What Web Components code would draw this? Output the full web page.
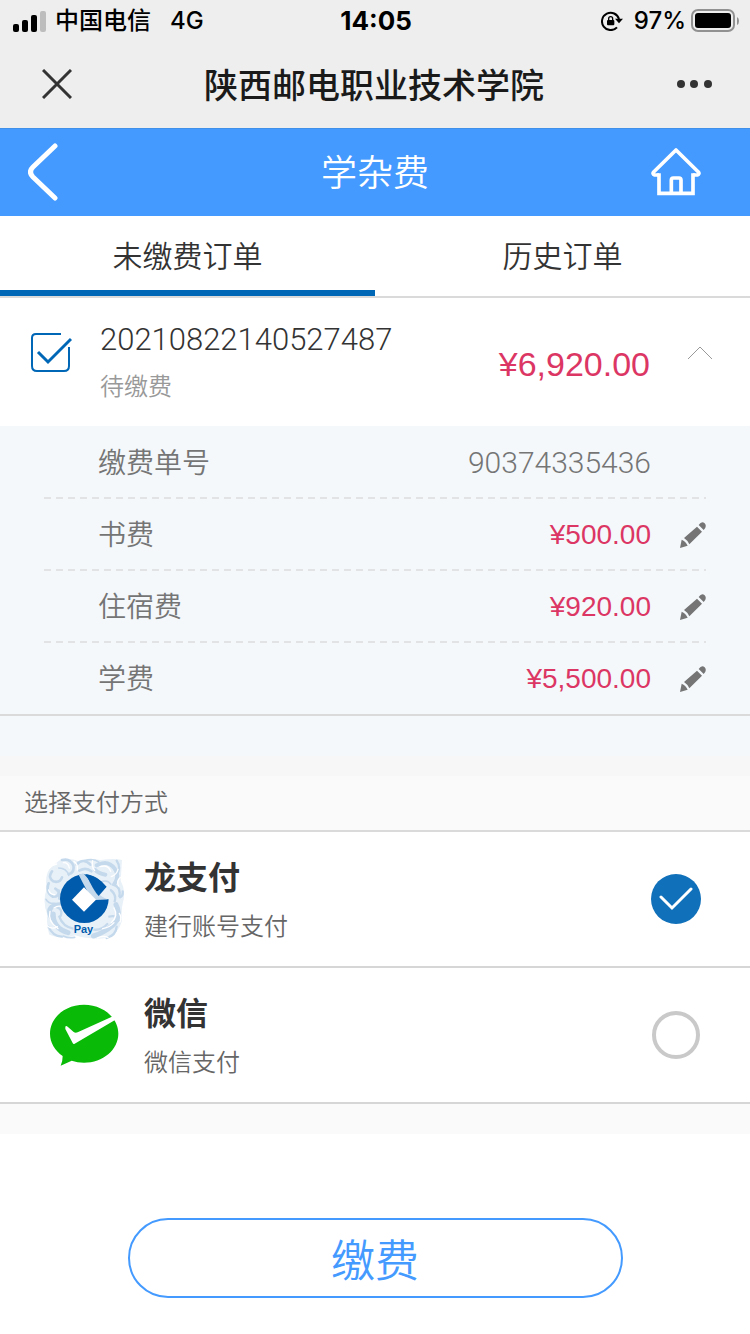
<!DOCTYPE html>
<html lang="zh-CN">
<head>
<meta charset="utf-8">
<meta name="viewport" content="width=device-width, initial-scale=1">
<title>学杂费</title>
<style>
  body {
    margin: 0;
    background: #fff;
    color: #333;
    font-family: "Noto Sans CJK SC", sans-serif;
    font-weight: 350;
    --blue: #449aff;
    --deep-blue: #0066b6;
    --price: #dc3664;
    --line: #dadada;
    --soft: #f4f8fb;
    --latin: Roboto, "Noto Sans CJK SC", sans-serif;
    --money: "Liberation Sans", "Noto Sans CJK SC", sans-serif;
  }
</style>
</head>
<body>
<status-bar carrier="中国电信" network="4G" time="14:05" battery="97%"></status-bar>
<chat-title>陕西邮电职业技术学院</chat-title>
<page-header>学杂费</page-header>
<order-tabs></order-tabs>
<order-card number="20210822140527487" state="待缴费" total="¥6,920.00">
  <fee-row label="缴费单号" plain>90374335436</fee-row>
  <fee-row label="书费">¥500.00</fee-row>
  <fee-row label="住宿费">¥920.00</fee-row>
  <fee-row label="学费">¥5,500.00</fee-row>
</order-card>
<pay-methods>选择支付方式</pay-methods>
<pay-button>缴费</pay-button>

<script>
class StatusBar extends HTMLElement {
  connectedCallback() {
    this.attachShadow({ mode: "open" });
    this.shadowRoot.innerHTML = /* HTML */ ` <style>
        :host {
          display: grid;
          grid-template-columns: 1fr auto 1fr;
          align-items: center;
          height: 40px;
          padding: 0 11px 0 13px;
          background: #eee;
          color: #000;
          font-family: Inter, "Noto Sans CJK SC", sans-serif;
          font-size: 24px;
          font-weight: 500;
          line-height: 42px;
        }
        div {
          display: flex;
          align-items: center;
        }
        .left { gap: 9px; }
        .net { margin-left: 10px; }
        .right { justify-content: flex-end; gap: 5px; }
        .lock { margin-right: 6px; }
        .time {
          font-size: 26px;
          font-weight: 700;
        }
      </style>
      <div class="left">
        <svg width="33" height="21" viewBox="0 0 33 21">
          <rect x="0" y="13" width="6" height="8" rx="2" />
          <rect x="9" y="9" width="6" height="12" rx="2" />
          <rect x="18" y="4" width="6" height="17" rx="2" />
          <rect x="27" y="0" width="6" height="21" rx="2" fill="#bdbdbd" />
        </svg>
        <span>${this.getAttribute("carrier")}</span>
        <span class="net">${this.getAttribute("network")}</span>
      </div>
      <span class="time">${this.getAttribute("time")}</span>
      <div class="right">
        <svg class="lock" width="22" height="20" viewBox="0 0 66 60">
          <path d="M48 49A26 26 0 1 1 54 24" fill="none" stroke="#000" stroke-width="6" />
          <path d="M42 23h24L54 37z" />
          <rect x="18" y="27" width="22" height="16" rx="3" />
          <path d="M23 28v-5a6 6 0 0 1 12 0v5" fill="none" stroke="#000" stroke-width="4" />
        </svg>
        <span>${this.getAttribute("battery")}</span>
        <svg width="48" height="24" viewBox="0 0 48 24">
          <rect x="1" y="1" width="42" height="21" rx="6" fill="none" stroke="#919191" stroke-width="2" />
          <rect x="4" y="4" width="36" height="15" rx="3" />
          <path d="M46 8q2 1 2 4t-2 4z" fill="#919191" />
        </svg>
      </div>`;
  }
}
customElements.define("status-bar", StatusBar);

class ChatTitle extends HTMLElement {
  connectedCallback() {
    this.attachShadow({ mode: "open" });
    this.shadowRoot.innerHTML = /* HTML */ ` <style>
        :host {
          display: grid;
          grid-template-columns: 1fr auto 1fr;
          align-items: center;
          height: 88px;
          padding: 0 38px 0 36px;
          background: #eee;
        }
        h1 {
          margin: 0;
          color: #1a1a1a;
          font-size: 34px;
          font-weight: 500;
          line-height: 84px;
        }
        button {
          display: grid;
          padding: 0 6px;
          border: 0;
          background: none;
        }
        .more {
          justify-self: end;
          padding: 0;
        }
      </style>
      <button aria-label="关闭">
        <svg width="30" height="30" viewBox="0 0 30 30">
          <path d="M1 1l28 28M29 1L1 29" stroke="#333" stroke-width="3" />
        </svg>
      </button>
      <h1><slot></slot></h1>
      <button class="more" aria-label="更多">
        <svg width="35" height="8" viewBox="0 0 35 8" fill="#333">
          <circle cx="4" cy="4" r="4" />
          <circle cx="17" cy="4" r="4" />
          <circle cx="31" cy="4" r="4" />
        </svg>
      </button>`;
  }
}
customElements.define("chat-title", ChatTitle);

class PageHeader extends HTMLElement {
  connectedCallback() {
    this.attachShadow({ mode: "open" });
    this.shadowRoot.innerHTML = /* HTML */ ` <style>
        :host {
          display: grid;
          grid-template-columns: 1fr auto 1fr;
          align-items: center;
          height: 88px;
          box-sizing: border-box;
          padding: 0 28px 2px;
          border-top: 1px solid #408fe8;
          background: var(--blue);
          color: #fff;
        }
        h2 {
          margin: 0;
          padding-bottom: 4px;
          font-size: 36px;
          font-weight: inherit;
          line-height: 80px;
        }
        button {
          display: grid;
          padding: 0;
          border: 0;
          background: none;
        }
        a {
          display: grid;
          justify-self: end;
          padding-right: 21px;
        }
        svg {
          fill: none;
          stroke: #fff;
        }
      </style>
      <button aria-label="返回">
        <svg width="30" height="58" viewBox="0 0 30 58">
          <path d="M27 3L5 24q-5 5 0 10l22 21" stroke-width="5" stroke-linecap="round" />
        </svg>
      </button>
      <h2><slot></slot></h2>
      <a href="#home" aria-label="首页">
        <svg width="50" height="48" viewBox="0 0 150 144">
          <path d="M24 81H11q-8-3-3-9L75 6l67 66q5 6-3 9h-13" stroke-width="11" stroke-linejoin="round" />
          <path d="M24 76v60h102V76M61 136V96q0-6 6-6h17q6 0 6 6v40" stroke-width="11" />
        </svg>
      </a>`;
  }
}
customElements.define("page-header", PageHeader);

class OrderTabs extends HTMLElement {
  connectedCallback() {
    this.attachShadow({ mode: "open" });
    this.shadowRoot.innerHTML = /* HTML */ ` <style>
        :host {
          display: grid;
          grid-template-columns: 1fr 1fr;
          border-bottom: 2px solid var(--line);
        }
        button {
          height: 80px;
          padding: 2px 0 0;
          border: 0;
          border-bottom: 6px solid transparent;
          background: #fff;
          color: #333;
          font: inherit;
          font-size: 30px;
          line-height: 72px;
        }
        [aria-selected="true"] { border-bottom-color: var(--deep-blue); }
      </style>
      <button role="tab" aria-selected="true">未缴费订单</button>
      <button role="tab" aria-selected="false">历史订单</button>`;

    this.$tabs = this.shadowRoot.querySelectorAll("button");
    this.$tabs.forEach((tab) => {
      tab.addEventListener("click", () => this.select(tab));
    });
  }

  select(tab) {
    this.$tabs.forEach((t) => t.setAttribute("aria-selected", t === tab));
  }
}
customElements.define("order-tabs", OrderTabs);

class OrderCard extends HTMLElement {
  connectedCallback() {
    this.attachShadow({ mode: "open" });
    this.shadowRoot.innerHTML = /* HTML */ ` <style>
        :host { display: block; }
        header {
          display: grid;
          grid-template-columns: 100px 1fr auto 100px;
          padding: 18px 0;
        }
        .check {
          display: grid;
          margin: 16px 0 0 30px;
          width: 42px;
          height: 42px;
        }
        .check > * { grid-area: 1 / 1; }
        input {
          appearance: none;
          width: 42px;
          height: 42px;
          margin: 0;
        }
        .check svg {
          fill: none;
          stroke: var(--deep-blue);
          stroke-width: 2;
          pointer-events: none;
        }
        input:not(:checked) + svg .tick { display: none; }
        label {
          display: block;
          font-family: var(--latin);
          font-size: 31px;
          line-height: 48px;
        }
        p {
          margin: 0;
          color: #999;
          font-size: 24px;
          line-height: 42px;
          padding-bottom: 2px;
        }
        .total {
          align-self: center;
          color: var(--price);
          font-family: var(--money);
          font-size: 34px;
          font-weight: 400;
          line-height: 48px;
          padding-top: 4px;
        }
        button {
          display: grid;
          align-self: start;
          justify-self: center;
          margin-top: 24px;
          padding: 6px 0;
          border: 0;
          background: none;
        }
        section {
          padding-bottom: 40px;
          background: var(--soft);
        }
        .fees {
          padding-top: 1px;
          border-bottom: 2px solid var(--line);
        }
        :host([collapsed]) section { display: none; }
      </style>
      <header>
        <div class="check">
          <input type="checkbox" id="order" checked>
          <svg width="42" height="42" viewBox="0 0 42 42">
            <path d="M31 2H6Q2 2 2 6v28q0 5 5 5h27q5 0 5-5V15" />
            <path class="tick" d="M8 20l10 10L41 7" stroke-width="3" />
          </svg>
        </div>
        <div>
          <label for="order">${this.getAttribute("number")}</label>
          <p>${this.getAttribute("state")}</p>
        </div>
        <span class="total">${this.getAttribute("total")}</span>
        <button aria-label="收起明细">
          <svg width="26" height="14" viewBox="0 0 26 14">
            <path d="M1 13L13 1l12 12" fill="none" stroke="#999" />
          </svg>
        </button>
      </header>
      <section><div class="fees"><slot></slot></div></section>`;

    this.shadowRoot.querySelector("button").addEventListener("click", () => {
      this.toggleAttribute("collapsed");
    });
  }
}
customElements.define("order-card", OrderCard);

class FeeRow extends HTMLElement {
  connectedCallback() {
    this.attachShadow({ mode: "open" });
    const label = this.getAttribute("label");
    const edit = /* HTML */ ` <button aria-label="修改${label}">
        <svg width="26" height="26" viewBox="0 0 78 78" fill="#757575">
          <path d="M0 78l5-25q12 4 18 18zM12 48l39-34 15 15-38 38q-5-12-16-19zM56 9q9-13 18-5 8 9-3 20z" />
        </svg>
      </button>`;

    this.shadowRoot.innerHTML = /* HTML */ ` <style>
        :host {
          display: grid;
          grid-template-columns: 1fr auto 55px;
          align-items: center;
          height: 72px;
          margin: 0 44px;
          padding-left: 54px;
          color: #757575;
          font-size: 28px;
          line-height: 72px;
          background: repeating-linear-gradient(90deg, #e2e3e4 0 7px, transparent 7px 12px) left bottom / 100% 2px no-repeat;
        }
        :host(:last-of-type) {
          height: 71px;
          background: none;
        }
        .label {
          line-height: 68px;
          padding-bottom: 4px;
        }
        .value {
          color: var(--price);
          font-family: var(--money);
          font-weight: 400;
        }
        :host([plain]) .value {
          color: #757575;
          font-family: var(--latin);
          font-size: 30px;
          font-weight: inherit;
        }
        button {
          display: grid;
          justify-self: end;
          padding: 0;
          border: 0;
          background: none;
        }
      </style>
      <span class="label">${label}</span>
      <span class="value"><slot></slot></span>
      ${this.hasAttribute("plain") ? "" : edit}`;
  }
}
customElements.define("fee-row", FeeRow);

const dragonLogo = /* HTML */ `<svg width="80" height="82" viewBox="0 0 240 246">
  <path d="M52 4q30-6 56 8 30-12 62-6 40-6 64 0-2 34-4 62 16 30 8 60-8 30-4 60-10 40-48 52-50 6-92-8-40 14-78-2-10-30-6-60-16-40-2-76-6-40 8-60 20-20 36-30z" fill="#e9f1f8" />
  <g fill="none" stroke="#c5d9ec" stroke-linecap="round">
    <path d="M22 178q-18-34 24-38M28 168q-2 42 44 56M216 140q18 34-10 62-26 22-58 32" stroke-width="15" />
    <path d="M158 22q34-18 54 10 16 22 0 44M184 50q-22-4-30-14" stroke-width="12" />
    <path d="M54 6q24-6 34 16 4 22-14 26M24 40q-14 18 4 30 20 6 26-12M14 76q-10 26 12 40 20 2 18-18M34 92q14 8 12 30M98 20q18-22 42 0M106 38q20-12 36 2" stroke-width="8" />
    <path d="M218 8q12 18 4 36M206 80q26 6 20 34M236 100q2 14-8 18M200 96q18 14 12 34M14 206q10 28 40 30M46 176q10 30 42 36M34 146q24 6 16 28M218 206q-2 26-30 34M196 176q20-6 28 12M144 214q26 6 46-16" stroke-width="7" />
    <path d="M44 30q24 0 30 22M120 8q30-8 44 4M176 70q16-4 24 8M6 124q8 14 26 12M92 238q-18 4-34-4" stroke-width="5" />
  </g>
  <g fill="none" stroke="#fff" stroke-width="4" stroke-linecap="round">
    <path d="M18 160q-8 30 24 52M30 150q14-10 26-2M168 26q24-8 32 14M210 150q14 24-8 44M58 14q16 0 18 16M202 56q16-6 20-22M14 96q4 14 18 14M176 212q22-4 34-18" />
    <path d="M8 32q14-10 30-14M90 10q12 8 10 26M146 8q-4 18 6 30M230 58q-14 10-6 26M40 206q-14 10-30-2M226 166q8 12 2 26M160 240q16-8 32-2" />
  </g>
  <circle cx="121" cy="122" r="73" fill="#005bac" />
  <path d="M148 124l44-42 14 42z" fill="#e9f1f8" />
  <path d="M118 46q24 26 34 48 12 20 38 30l-36 2q-16-10-26-30-14-26-24-46z" fill="#c5d9ec" />
  <path d="M126 48q38 10 62 38l-24 28q-16-16-38-66z" fill="#005bac" />
  <path d="M120 88l36 37-36 36-36-36z" fill="#fff" />
  <text x="89" y="224" fill="#005bac" stroke="#e9f1f8" stroke-width="6" paint-order="stroke" font-family="Liberation Sans, sans-serif" font-size="33" font-weight="700">Pay</text>
</svg>`;

const wechatLogo = /* HTML */ `<svg width="70" height="62" viewBox="0 0 210 186">
  <path d="M105 2c57 0 103 39 103 87s-46 87-103 87q-20 0-37-6L35 185q6-12 6-29C18 140 3 116 3 89 3 41 48 2 105 2z" fill="#09bb07" />
  <path d="M49 68q2-4 7 0l18 16q5 4 12 1l106-48 10 9L77 119q-4 2-6-2L49 75z" fill="#fff" />
</svg>`;

class PayMethods extends HTMLElement {
  methods = [
    { id: "dragon", name: "龙支付", note: "建行账号支付", logo: dragonLogo },
    { id: "wechat", name: "微信", note: "微信支付", logo: wechatLogo },
  ];

  connectedCallback() {
    this.attachShadow({ mode: "open" });
    this.shadowRoot.innerHTML = /* HTML */ ` <style>
        :host {
          display: block;
          border-top: 20px solid #f7f7f7;
          border-bottom: 30px solid #fafafa;
        }
        h3 {
          margin: 0;
          padding: 0 24px 4px;
          border-bottom: 2px solid var(--line);
          background: #fafafa;
          color: #666;
          font-size: 24px;
          font-weight: inherit;
          line-height: 50px;
        }
        label {
          display: grid;
          grid-template-columns: 80px 1fr 50px;
          column-gap: 20px;
          align-items: center;
          height: 134px;
          padding: 0 49px 0 44px;
          border-bottom: 2px solid #d6d6d6;
        }
        .logo {
          display: grid;
          justify-items: center;
        }
        strong {
          display: block;
          margin-bottom: 4px;
          font-size: 32px;
          font-weight: 700;
          line-height: 48px;
        }
        small {
          display: block;
          color: #666;
          font-size: 24px;
          line-height: 44px;
        }
        .radio {
          display: grid;
          place-items: center;
        }
        .radio > * { grid-area: 1 / 1; }
        input {
          appearance: none;
          box-sizing: border-box;
          width: 48px;
          height: 48px;
          margin: 0;
          border: 4px solid #c9c9c9;
          border-radius: 50%;
        }
        input:checked {
          width: 50px;
          height: 50px;
          border: 0;
          background: #1070b9;
        }
        input:not(:checked) + svg { display: none; }
        .radio svg { pointer-events: none; }
      </style>
      <h3><slot></slot></h3>
      ${this.methods.map((m, i) => this.row(m, i === 0)).join("")}`;
  }

  row({ id, name, note, logo }, checked) {
    return /* HTML */ ` <label for="${id}">
        <span class="logo">${logo}</span>
        <span><strong>${name}</strong><small>${note}</small></span>
        <span class="radio">
          <input type="radio" name="pay" id="${id}" ${checked ? "checked" : ""}>
          <svg width="34" height="24" viewBox="0 0 34 24">
            <path d="M2 10l11 11L32 2" fill="none" stroke="#fff" stroke-width="3" stroke-linecap="round" />
          </svg>
        </span>
      </label>`;
  }
}
customElements.define("pay-methods", PayMethods);

class PayButton extends HTMLElement {
  connectedCallback() {
    this.attachShadow({ mode: "open" });
    this.shadowRoot.innerHTML = /* HTML */ ` <style>
        :host {
          display: grid;
          padding: 84px 17% 36px;
        }
        button {
          height: 80px;
          padding: 0;
          border: 2px solid var(--blue);
          border-radius: 40px;
          background: #fff;
          color: var(--blue);
          font: inherit;
          font-size: 44px;
          line-height: 76px;
        }
      </style>
      <button><slot></slot></button>`;
  }
}
customElements.define("pay-button", PayButton);
</script>
</body>
</html>
